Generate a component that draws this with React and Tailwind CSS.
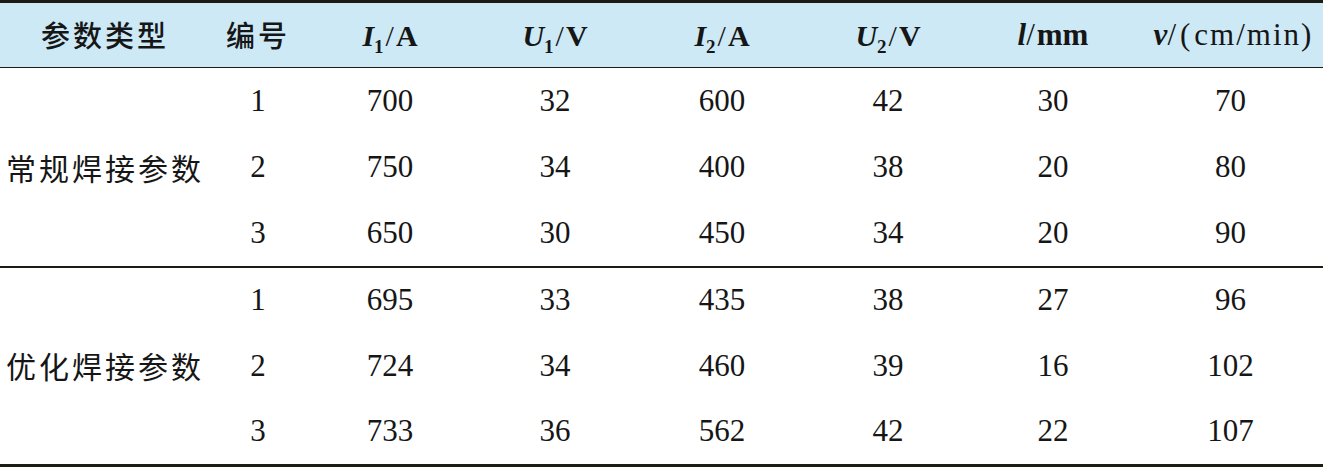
const COLS = [
  'w-[210px]',
  'w-[96px]',
  'w-[168px]',
  'w-[162px]',
  'w-[172px]',
  'w-[160px]',
  'w-[170px]',
  'w-[185px]',
];

const GROUPS = [
  {
    label: '常规焊接参数',
    rows: [
      ['1', '700', '32', '600', '42', '30', '70'],
      ['2', '750', '34', '400', '38', '20', '80'],
      ['3', '650', '30', '450', '34', '20', '90'],
    ],
  },
  {
    label: '优化焊接参数',
    rows: [
      ['1', '695', '33', '435', '38', '27', '96'],
      ['2', '724', '34', '460', '39', '16', '102'],
      ['3', '733', '36', '562', '42', '22', '107'],
    ],
  },
];

const serif = 'font-[family-name:Liberation_Serif,serif]';
const cjk = 'font-[family-name:Noto_Sans_CJK_SC,sans-serif]';

function Sym({ letter, sub, unit }) {
  return (
    <span className={`${serif} text-[30px] text-[#161616]`}>
      <b className="italic">{letter}</b>
      {sub && <b className="text-[19px] relative top-[7px]">{sub}</b>}
      <span className="mx-[2px]">/</span>
      <b>{unit}</b>
    </span>
  );
}

function Header() {
  return (
    <div className="flex h-[64px] bg-[#cde9f6] items-center">
      <div className={`${COLS[0]} flex justify-center ${cjk} font-medium text-[29px] tracking-[3px] text-[#161616]`}>参数类型</div>
      <div className={`${COLS[1]} flex justify-center ${cjk} font-medium text-[29px] tracking-[3px] text-[#161616]`}>编号</div>
      <div className={`${COLS[2]} flex justify-center`}><Sym letter="I" sub="1" unit="A" /></div>
      <div className={`${COLS[3]} flex justify-center`}><Sym letter="U" sub="1" unit="V" /></div>
      <div className={`${COLS[4]} flex justify-center`}><Sym letter="I" sub="2" unit="A" /></div>
      <div className={`${COLS[5]} flex justify-center`}><Sym letter="U" sub="2" unit="V" /></div>
      <div className={`${COLS[6]} flex justify-center`}>
        <span className={`${serif} text-[31px] text-[#161616]`}>
          <b className="italic">l</b>/<b className="ml-[2px]">mm</b>
        </span>
      </div>
      <div className={`${COLS[7]} flex justify-center pl-[4px]`}>
        <span className={`${serif} text-[31px] text-[#161616] whitespace-nowrap`}>
          <b className="italic">v</b>/<span className="ml-[4px]">(</span>
          <span className="ml-[4px] tracking-[2px]">cm/min</span>)
        </span>
      </div>
    </div>
  );
}

function Group({ label, rows, height }) {
  return (
    <div className="flex">
      <div className={`${COLS[0]} flex items-center justify-center ${cjk} text-[30px] tracking-[3px] text-[#161616]`}>
        {label}
      </div>
      <div className="flex flex-col">
        {rows.map((r, i) => (
          <div key={i} className={`flex items-center ${height}`}>
            {r.map((v, j) => (
              <div key={j} className={`${COLS[j + 1]} text-center ${serif} text-[31px] text-[#161616]`}>
                {v}
              </div>
            ))}
          </div>
        ))}
      </div>
    </div>
  );
}

export default function App() {
  return (
    <div className="w-[1323px] h-[467px] bg-white">
      <div className="border-t-[3px] border-b-[4px] border-[#1c1c14]">
        <Header />
        <div className="border-t border-[#1c1c14]">
          <Group {...GROUPS[0]} height="h-[66px]" />
        </div>
        <div className="border-t-2 border-[#1c1c14]">
          <Group {...GROUPS[1]} height="h-[65.3px]" />
        </div>
      </div>
    </div>
  );
}
